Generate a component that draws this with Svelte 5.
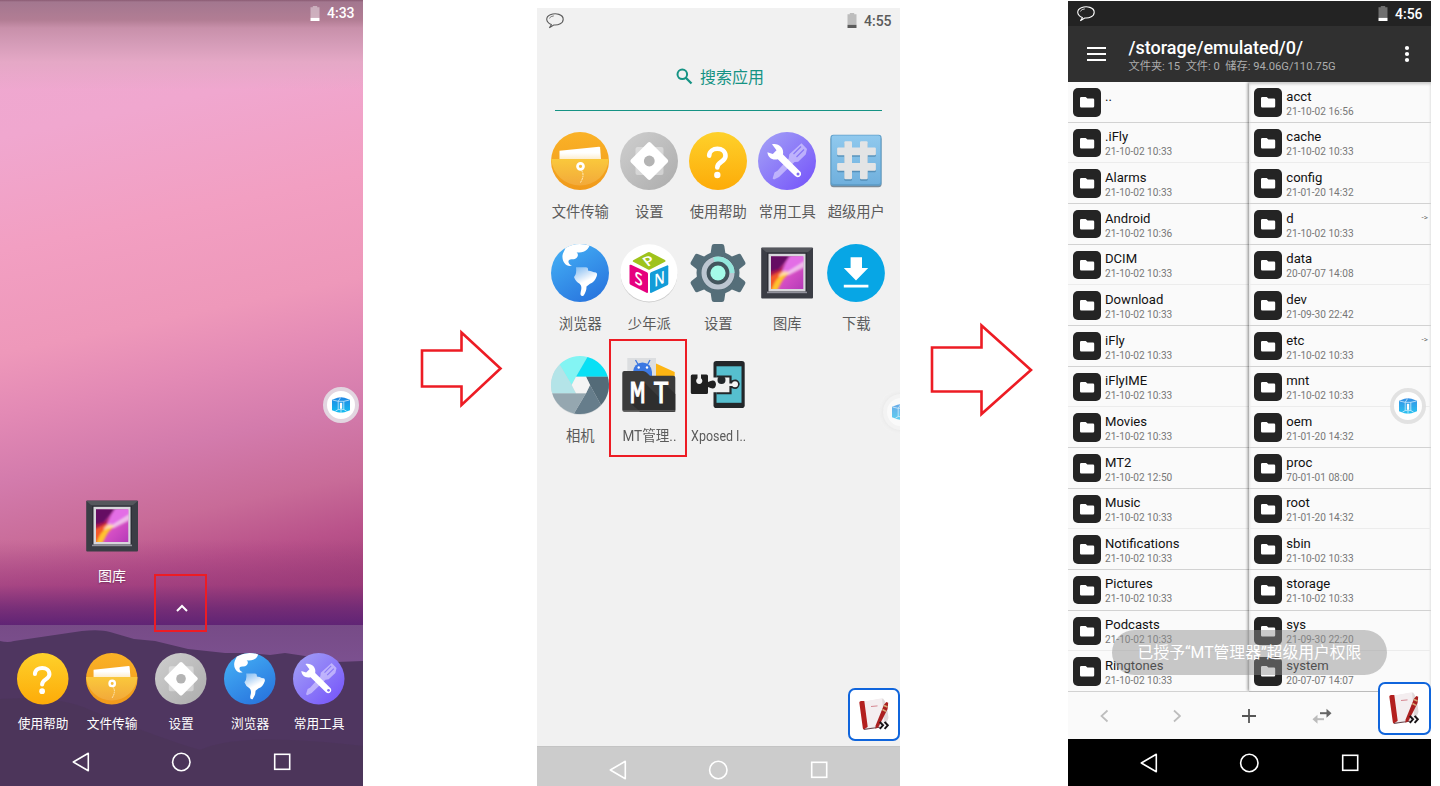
<script>
  const dock = [
    ['help', '使用帮助'], ['transfer', '文件传输'], ['settings', '设置'], ['browser', '浏览器'], ['tools', '常用工具']
  ];
  const apps = [
    ['transfer', '文件传输'], ['settings', '设置'], ['help', '使用帮助'], ['tools', '常用工具'], ['superuser', '超级用户'],
    ['browser', '浏览器'], ['psn', '少年派'], ['gear', '设置'], ['gallery', '图库'], ['download', '下载'],
    ['camera', '相机'], ['mt', 'MT管理..'], ['xposed', 'Xposed I..']
  ];
  const left = [
    ['..', ''], ['.iFly', '21-10-02 10:33'], ['Alarms', '21-10-02 10:33'], ['Android', '21-10-02 10:36'],
    ['DCIM', '21-10-02 10:33'], ['Download', '21-10-02 10:33'], ['iFly', '21-10-02 10:33'], ['iFlyIME', '21-10-02 10:33'],
    ['Movies', '21-10-02 10:33'], ['MT2', '21-10-02 12:50'], ['Music', '21-10-02 10:33'], ['Notifications', '21-10-02 10:33'],
    ['Pictures', '21-10-02 10:33'], ['Podcasts', '21-10-02 10:33'], ['Ringtones', '21-10-02 10:33']
  ];
  const right = [
    ['acct', '21-10-02 16:56'], ['cache', '21-10-02 10:33'], ['config', '21-01-20 14:32'], ['d', '21-10-02 10:33', true],
    ['data', '20-07-07 14:08'], ['dev', '21-09-30 22:42'], ['etc', '21-10-02 10:33', true], ['mnt', '21-10-02 10:33'],
    ['oem', '21-01-20 14:32'], ['proc', '70-01-01 08:00'], ['root', '21-01-20 14:32'], ['sbin', '21-10-02 10:33'],
    ['storage', '21-10-02 10:33'], ['sys', '21-09-30 22:20'], ['system', '20-07-07 14:07']
  ];
</script>

{#snippet icon(name)}
  <svg class="icon" viewBox="0 0 58 58">
    {#if name === 'transfer'}
      <circle cx="29" cy="29" r="29" fill="url(#gOrange)" />
      <path d="M8.5 18.8L48 14.7Q49 14.6 49.1 15.6L50 27H8.5Z" fill="url(#gPaper)" />
      <path d="M.1 27H57.9A29 29 0 0 1 .1 27Z" fill="url(#gPocket)" />
      <circle cx="29.5" cy="34.3" r="3" fill="none" stroke="#fff" stroke-width="2.7" />
      <path d="M30.5 38.5Q34 43 29.5 50.5" fill="none" stroke="#fff3d0" stroke-width=".9" stroke-dasharray="2 .7" />
    {:else if name === 'settings'}
      <circle cx="29" cy="29" r="29" fill="url(#gGrey)" />
      <rect x="15.5" y="15" width="28" height="28" rx="2" fill="#fff" opacity=".38" />
      <path d="M27.8 10.8Q29.3 9.3 30.8 10.8L47.6 27.6Q49 29 47.6 30.4L30.8 47.2Q29.3 48.7 27.8 47.2L11 30.4Q9.6 29 11 27.6Z" fill="#fff" />
      <circle cx="29.3" cy="29" r="5.4" fill="#b4b4b4" />
    {:else if name === 'help'}
      <circle cx="29" cy="29" r="29" fill="url(#gYellow)" />
      <path d="M20.2 23.6C20.5 14.5 36.5 14.5 36.5 24C36.5 30 28.3 29.5 28.3 35.4" fill="none" stroke="#fff" stroke-width="4.6" stroke-linecap="round" />
      <circle cx="28.3" cy="43" r="3.2" fill="#fff" />
    {:else if name === 'tools'}
      <circle cx="29" cy="29" r="29" fill="url(#gPurple)" />
      <g opacity=".58">
        <path d="M43.5 11.3L49 17L47.7 22.5L40.2 29.7L36.5 30L21 45L16 47.5L14.6 46.4L16.5 40.5L19.5 38.8L30.8 26.2L31.3 22.3Z" fill="#e3dcff" />
        <path d="M43 14.5L35.5 22M46 17.5L38.5 25" stroke="#8a79f5" stroke-width="1.3" />
      </g>
      <path d="M14 12.3C20 10.8 26.5 15.5 25 22.5L42.6 40Q44 42.8 41.5 44.8Q39 46 37.1 44.1L19.8 27.2C14.5 28.8 9.8 25.5 9.4 20.3L14.8 22.1L18.5 18.3Z" fill="#fff" />
      <circle cx="40" cy="42" r="1.5" fill="#806ef1" />
    {:else if name === 'superuser'}
      <rect x="3.5" y="4.2" width="51" height="51" rx="3" fill="#7b8b98" />
      <rect x="3.5" y="2.8" width="51" height="51" rx="2.8" fill="#5f9fca" />
      <rect x="4.6" y="3.6" width="48.8" height="48.4" rx="2" fill="url(#gSky)" />
      <path d="M18.5 10.8h5.3q1.2 0 1.2 1.2v5h8v-5q0-1.2 1.2-1.2h5.3q1.2 0 1.2 1.2v5h7q1.2 0 1.2 1.2v5.3q0 1.2-1.2 1.2h-7v7.8h7q1.2 0 1.2 1.2v5.3q0 1.2-1.2 1.2h-7v7.3q0 1.2-1.2 1.2h-5.3q-1.2 0-1.2-1.2v-7.3h-8v7.3q0 1.2-1.2 1.2h-5.3q-1.2 0-1.2-1.2v-7.3h-6q-1.2 0-1.2-1.2v-5.3q0-1.2 1.2-1.2h6v-7.8h-6q-1.2 0-1.2-1.2v-5.3q0-1.2 1.2-1.2h6v-5q0-1.2 1.2-1.2zM25 24.7v7.8h8v-7.8z" fill="#437da5" fill-rule="evenodd" opacity=".65" />
      <path d="M18.5 9.3h5.3q1.2 0 1.2 1.2v5h8v-5q0-1.2 1.2-1.2h5.3q1.2 0 1.2 1.2v5h7q1.2 0 1.2 1.2v5.3q0 1.2-1.2 1.2h-7v7.8h7q1.2 0 1.2 1.2v5.3q0 1.2-1.2 1.2h-7v7.3q0 1.2-1.2 1.2h-5.3q-1.2 0-1.2-1.2v-7.3h-8v7.3q0 1.2-1.2 1.2h-5.3q-1.2 0-1.2-1.2v-7.3h-6q-1.2 0-1.2-1.2v-5.3q0-1.2 1.2-1.2h6v-7.8h-6q-1.2 0-1.2-1.2v-5.3q0-1.2 1.2-1.2h6v-5q0-1.2 1.2-1.2zM25 23.2v7.8h8v-7.8z" fill="#e3e4e5" fill-rule="evenodd" />
    {:else if name === 'browser'}
      <circle cx="29" cy="29" r="29" fill="url(#gBlue)" />
      <path d="M14.5 3.9A29 29 0 0 1 38.5 1.6C37.5 5 34 9.5 25.5 8.3C28.5 10.5 26.5 15.5 21 15.2C15.5 14.8 17 20.5 21 21.6C16 23.5 11.5 18.5 11.5 13.5C11 10 13 7.5 14.5 3.9Z" fill="#fff" />
      <path d="M25 23.2H34.5Q37.5 23 37 26.5Q40.5 27 43 28.3Q47 28 45.8 32Q43.5 38.5 39 39.8L35.5 42.5Q35.7 47.5 32.2 52Q28.6 52.5 29.7 48Q31.5 42 28.7 39.7Q24.5 37.5 23 33Q26 30 25 23.2Z" fill="url(#gLand)" />
    {:else if name === 'psn'}
      <circle cx="29" cy="30.2" r="28.3" fill="#bdbdbd" opacity=".7" />
      <circle cx="29" cy="28.8" r="28.6" fill="#fff" />
      <path d="M28 8.2Q29 7.6 30 8.2L45 16Q46 17 45 17.8L30 25.5Q29 26 28 25.5L13.2 17.8Q12.3 17 13.2 16.2Z" fill="#9fc31c" />
      <path d="M9.5 21.5Q9.8 20.3 11 20.8L27 28.3Q28 28.8 28 30V47.8Q28 49.5 26.5 48.8L10.5 40.8Q9.5 40.2 9.5 39Z" fill="#e6007e" />
      <path d="M48.3 22.2Q48.2 21 47 21.5L31 28.3Q30 28.8 30 30V47.8Q30 49.5 31.5 48.8L47.3 41.2Q48.3 40.6 48.3 39.5Z" fill="#139cd8" />
      <text transform="matrix(1 -.45 .6 .75 32 20.8)" x="-4.8" y="0" class="cube">P</text>
      <text transform="matrix(1 .46 0 1.15 19 41)" x="-4.5" y="0" class="cube">S</text>
      <text transform="matrix(.9 -.4 0 1.15 39.2 41)" x="-5.5" y="0" class="cube">N</text>
    {:else if name === 'gear'}
      <g fill="#556e79">
        <circle cx="29" cy="29" r="21.5" />
        {#each [0, 60, 120, 180, 240, 300] as a}
          <path d="M22.7 2Q23 0 25 0H33Q35 0 35.3 2L36.5 10H21.5Z" transform="rotate({a} 29 29)" />
        {/each}
      </g>
      <circle cx="29" cy="29" r="17" fill="#4c626c" />
      <circle cx="29" cy="29" r="13.8" fill="none" stroke="#bcc6d1" stroke-width="5.5" />
      <path d="M25 15.8A13.8 13.8 0 0 1 42.8 29" fill="none" stroke="#94e6dc" stroke-width="5.5" />
      <circle cx="29" cy="29" r="11.4" fill="#43555d" />
      <circle cx="29" cy="29" r="7.6" fill="#a4fbe8" />
    {:else if name === 'gallery'}
      <rect x="3.2" y="3.5" width="51.8" height="51" rx="1" fill="#3b3d45" />
      <path d="M3.5 4H54.7L50 8H8Z" fill="#55575d" />
      <rect x="9" y="9" width="40" height="39.5" fill="#2d2e36" />
      <rect x="9" y="47.6" width="40" height="1.6" fill="#92929c" />
      <rect x="10.5" y="9.8" width="37" height="37.6" fill="#d8d7dc" />
      <rect x="13" y="12.4" width="32.3" height="32.6" fill="url(#gPic)" />
      <g clip-path="url(#picClip)"><g filter="url(#soft)">
        <path d="M11 10H33L25 20L18 29L11 33Z" fill="#650b64" />
        <path d="M11 28L22 25L27 20L24 27L11 37Z" fill="#ad1546" />
        <path d="M33 10H48V17L31 28L24 27Q28 18 33 10Z" fill="#e36ee6" />
        <path d="M11 33L23 27L31 28Q25 30 22 36L18 47H11Z" fill="#f4582c" />
        <path d="M13 47Q17 35 25 29L32 29Q26 33 23 39L19 47Z" fill="#ffc22f" />
        <path d="M21 31Q25 25 30 27.5L47 17V23L31 31Q25 30 21 33Z" fill="#fff" opacity=".6" />
      </g></g>
    {:else if name === 'download'}
      <circle cx="29" cy="29" r="28.9" fill="#07a6e5" />
      <path d="M23.6 13.3H35V24H41.2L29 36.5L16.8 24H23.6ZM16.8 40.7H41.4V43.5H16.8Z" fill="#fff" />
    {:else if name === 'camera'}
      <circle cx="29" cy="29.7" r="29" fill="#9ba5a9" opacity=".4" />
      <path d="M20.7 29L8.5 8.5A29 29 0 0 1 36.5 1L25 20.7Z" fill="#83f4f3" />
      <path d="M25 20.7L36.5 1A29 29 0 0 1 56.8 20.7H35Z" fill="#08e0f5" />
      <path d="M35 20.7H56.8A29 29 0 0 1 50 49L39 29Z" fill="#546b78" />
      <path d="M39 29L50 49A29 29 0 0 1 23 57.4L35 37.3Z" fill="#667d8b" />
      <path d="M35 37.3L23 57.4A29 29 0 0 1 1.2 37.3H25Z" fill="#95a7b0" />
      <path d="M25 37.3H1.2A29 29 0 0 1 8.5 8.5L20.7 29Z" fill="#b4e4e8" />
      <path d="M20.7 29L25 20.7H35L39 29L35 37.3H25Z" fill="#f4f4f4" />
    {:else if name === 'mt'}
      <path d="M7.3 2H36V20H7.3Z" fill="#dcdee0" />
      <path d="M13 16A9.5 9.5 0 0 1 32 16V20H13Z" fill="#3c78e2" />
      <path d="M15.5 4L19 10M30 4L26.8 10" stroke="#3c78e2" stroke-width="1.3" />
      <circle cx="18.7" cy="11.5" r="1.2" fill="#fff" /><circle cx="27" cy="11.5" r="1.2" fill="#fff" />
      <path d="M36 7.5L54.7 16V24H36Z" fill="#fdb513" />
      <path d="M2.3 17Q2.3 15 4.3 15H23Q25 15 26.5 16.5L30 19.7H53.3Q55.3 19.7 55.3 21.7V53.7Q55.3 55.7 53.3 55.7H4.3Q2.3 55.7 2.3 53.7Z" fill="#3b3b3b" />
      <path d="M10.5 47L25 27L39 41L44 27L55.3 38V55.7H20Z" fill="#2e2e2e" />
      <path d="M3 54.7H54.7" stroke="#5f5f5f" stroke-width="1" />
      <text transform="translate(17.5 47) scale(.9 1.08)" class="mono">M</text>
      <text transform="translate(41 47) scale(.9 1.08)" class="mono">T</text>
    {:else if name === 'xposed'}
      <rect x="24.5" y="5" width="31.2" height="47" rx="2.8" fill="#23272a" />
      <rect x="27.5" y="10.3" width="25" height="36.5" fill="#56bfcf" />
      <path d="M27.5 19.5H42.6V24.6Q49 21.2 50.8 28Q49 35.5 42.6 32V38.3H27.5Z" fill="#23272a" />
      <path d="M22 21.5H40.4V27.5H44Q47.5 24.8 48.5 28Q47.5 32 43.5 30H40.4V36.2H22Z" fill="#f1f1f1" />
      <circle cx="32.5" cy="24" r="4" fill="#23272a" />
      <circle cx="46" cy="28.2" r="3" fill="#f4f4f4" />
      <path d="M1.8 20Q1.8 18.5 3.3 18.5H8.5V22.3A3.1 3.1 0 1 0 12 22.3V18.5H17.5Q19 18.5 19 20V26Q26.5 22 27 28.3Q26.5 35 19 31V36.5Q19 38 17.5 38H3.3Q1.8 38 1.8 36.5Z" fill="#202020" />
    {/if}
  </svg>
{/snippet}

{#snippet battery()}
  <svg class="battery" viewBox="0 0 10 15"><path d="M2.8 0h4.4v1.2h2.3v10.6H.5V1.2h2.3z" class="shell" /><path d="M.5 11.8h9V15h-9z" class="charge" /></svg>
{/snippet}

{#snippet bubble()}
  <svg class="bubble" viewBox="0 0 18 16" fill="none" stroke="currentColor"><path d="M5.3 11.6C-.6 9-.6 4 4.3 1.8C10-.5 17.2 1.5 17.2 6.2C17.2 10.3 12.5 12.4 7.7 12L3.3 14.8Q5 12.8 5.3 11.6Z" stroke-width="1.1" /><path d="M3.3 5.3Q4.8 3 7.8 2.9" stroke-width=".8" /></svg>
{/snippet}

{#snippet nav()}
  <svg class="navicons" viewBox="0 0 363 22" fill="none" stroke="currentColor" stroke-width="1.6">
    <path d="M73.3 11L88.3 2.3V19.7Z" stroke-linejoin="round" /><circle cx="181.3" cy="11" r="8.7" /><rect x="274.7" y="3.3" width="15" height="15" />
  </svg>
{/snippet}

{#snippet cube()}
  <svg class="cubeicon" viewBox="0 0 18 16">
    <path d="M0 2.8L5.5 .8Q9 -.2 12.5 .8L18 2.8V13.2L12.5 15.3Q9 16.2 5.5 15.3L0 13.2Z" fill="url(#gCube)" />
    <path d="M.5 3L6.2 4.3H11.8L17.5 3M6.2 4.3V12.6M11.8 4.3V12.6M8.6 .5L6.4 4M3.5 14L6.2 12.6H11.8L14.5 14M9 12.6V16" fill="none" stroke="#e4f5ff" stroke-width=".7" />
    <rect x="7.9" y="5.8" width="2.3" height="6" fill="#fff" />
  </svg>
{/snippet}

{#snippet book()}
  <svg class="bookicon" viewBox="0 0 52 52">
    <path d="M15 14L35 10.5Q39 14 40.5 30L38 36L17 42Z" fill="#e0d9da" />
    <path d="M16 13.4L34 10.2L36.5 36L19.5 40.3Z" fill="#f4eef0" />
    <path d="M11.3 14.5Q11.5 13 13 12.9L16.3 13L19.7 38.8L16 41.5Q15 41.5 14.8 40Z" fill="#b3201f" />
    <path d="M16 41.4L32 39.2" stroke="#67414a" stroke-width="1" />
    <path d="M23 18.5L29.5 17.9" stroke="#d58691" stroke-width="1" />
    <path d="M40.2 14.7L38.4 13.9L36 16.8L27.6 37.5L27.4 40.8L30.5 39L39.6 21Z" fill="#ab2020" />
    <path d="M36 17.5L39.5 19M34.4 21.5L38 23.4" stroke="#d5ab78" stroke-width="1.6" />
    <path d="M31.8 33.8L35 37.3L31.8 40.8M36.6 33.8L39.8 37.3L36.6 40.8" fill="none" stroke="#191417" stroke-width="2" />
  </svg>
{/snippet}

{#snippet row(item)}
  <div class="row">
    <div class="folder"><svg viewBox="0 0 28 28"><path d="M7 10.3Q7 9 8.3 9H12.7L14.4 10.5H20Q21.2 10.5 21.2 11.7V18.3Q21.2 19.5 20 19.5H8.3Q7 19.5 7 18.3Z" fill="#fff" /></svg></div>
    <div class="meta"><div class="name">{item[0]}</div><div class="date">{item[1]}</div></div>
    {#if item[2]}<div class="link">-&gt;</div>{/if}
  </div>
{/snippet}

<svg class="defs" width="0" height="0">
  <defs>
    <linearGradient id="gOrange" x1="0" y1="0" x2="0" y2="1"><stop offset="0" stop-color="#fab227" /><stop offset="1" stop-color="#f09a1b" /></linearGradient>
    <linearGradient id="gPocket" x1="0" y1="0" x2="0" y2="1"><stop offset="0" stop-color="#fac83c" /><stop offset="1" stop-color="#f2a93a" /></linearGradient>
    <linearGradient id="gPaper" x1="0" y1="0" x2="0" y2="1"><stop offset=".5" stop-color="#fff" /><stop offset="1" stop-color="#fdeed0" /></linearGradient>
    <linearGradient id="gGrey" x1="0" y1="0" x2="1" y2="1"><stop offset="0" stop-color="#cfcfcf" /><stop offset="1" stop-color="#acacac" /></linearGradient>
    <linearGradient id="gYellow" x1="0" y1="0" x2="0" y2="1"><stop offset="0" stop-color="#fed12b" /><stop offset="1" stop-color="#fdab08" /></linearGradient>
    <linearGradient id="gPurple" x1="0" y1="0" x2="1" y2="1"><stop offset="0" stop-color="#a5a4f6" /><stop offset="1" stop-color="#7350fa" /></linearGradient>
    <linearGradient id="gSky" x1="0" y1="0" x2="0" y2="1"><stop offset="0" stop-color="#90c9ee" /><stop offset="1" stop-color="#70b0dd" /></linearGradient>
    <linearGradient id="gBlue" x1="0" y1="0" x2=".6" y2="1"><stop offset="0" stop-color="#46b4f7" /><stop offset="1" stop-color="#2a78df" /></linearGradient>
    <linearGradient id="gLand" x1="0" y1="0" x2=".4" y2="1"><stop offset="0" stop-color="#fff" stop-opacity=".35" /><stop offset=".6" stop-color="#fff" /></linearGradient>
    <linearGradient id="gPic" x1="0" y1="0" x2="1" y2="1"><stop offset="0" stop-color="#74105f" /><stop offset=".5" stop-color="#dc53c8" /><stop offset="1" stop-color="#b53ab8" /></linearGradient>
    <linearGradient id="gCube" x1="0" y1="0" x2="0" y2="1"><stop offset="0" stop-color="#2086e4" /><stop offset="1" stop-color="#12bdf0" /></linearGradient>
    <clipPath id="picClip"><rect x="13" y="12.4" width="32.3" height="32.6" /></clipPath>
    <filter id="soft"><feGaussianBlur stdDeviation="1" /></filter>
  </defs>
</svg>

<main>
  <section class="phone home">
    <div class="status">{@render battery()}<span>4:33</span></div>
    <div class="desktop">
      <div class="app">{@render icon('gallery')}<span>图库</span></div>
    </div>
    <div class="drawer"><svg viewBox="0 0 12 8"><path d="M1 7L6 2L11 7" fill="none" stroke="#fff" stroke-width="2" /></svg></div>
    <div class="bottom">
      <svg class="hills" viewBox="0 0 363 161" preserveAspectRatio="none"><path d="M0 16Q8 18 14 16L82 6Q100 4 110 7L134 14L155 16L188 24L225 28L250 28L270 30L285 28L305 31L337 37L363 36V161H0Z" fill="#4f3660" /><path d="M90 85Q60 70 0 74V161H363V121Q240 106 200 125Q165 115 90 85Z" fill="#4c3559" opacity=".7" /></svg>
      <div class="dock">
        {#each dock as a}<div class="app">{@render icon(a[0])}<span>{a[1]}</span></div>{/each}
      </div>
      {@render nav()}
    </div>
    <div class="mark caret"></div>
    <div class="float">{@render cube()}</div>
  </section>

  <svg class="arrow first" viewBox="0 0 174 786"><path d="M59 350.5H98.5V332.5L137.5 368.5L98.5 405V386.5H59Z" /></svg>

  <section class="phone list">
    <div class="status">{@render bubble()}<i></i>{@render battery()}<span>4:55</span></div>
    <div class="search">
      <svg viewBox="0 0 17 17" fill="none" stroke="currentColor"><circle cx="6.3" cy="6.3" r="4.8" stroke-width="2" /><path d="M9.8 9.8L15.5 15.5" stroke-width="2.3" /></svg>
      <span>搜索应用</span>
    </div>
    <div class="grid">
      {#each apps as a}<div class="app" class:latin={a[0] === 'xposed'} class:mixed={a[0] === 'mt'}>{@render icon(a[0])}<span>{a[1]}</span></div>{/each}
    </div>
    <div class="bar">{@render nav()}</div>
    <div class="mark mtbox"></div>
    <div class="float faded">{@render cube()}</div>
    <div class="widget">{@render book()}</div>
  </section>

  <svg class="arrow second" viewBox="0 0 168 786"><path d="M32 347.5H81.5V325.5L131 370L81.5 414V391.5H32Z" /></svg>

  <section class="phone files">
    <div class="status">{@render bubble()}<i></i>{@render battery()}<span>4:56</span></div>
    <header>
      <svg class="menu" viewBox="0 0 19 14"><path d="M0 1H19M0 7H19M0 13H19" stroke="#fff" stroke-width="2" /></svg>
      <div class="title"><b>/storage/emulated/0/</b><small>文件夹: 15&nbsp; 文件: 0&nbsp; 储存: 94.06G/110.75G</small></div>
      <svg class="more" viewBox="0 0 6 18" fill="#fff"><circle cx="3" cy="3" r="2.1" /><circle cx="3" cy="9" r="2.1" /><circle cx="3" cy="15" r="2.1" /></svg>
    </header>
    <div class="panes">
      <div class="pane">{#each left as item}{@render row(item)}{/each}</div>
      <div class="pane side">{#each right as item}{@render row(item)}{/each}</div>
    </div>
    <svg class="toolbar" viewBox="0 0 363 47" fill="none" stroke-width="1.7">
      <path d="M39.5 18.5L33.5 24L39.5 29.5M106 18.5L112 24L106 29.5" stroke="#bdbdbd" />
      <path d="M181 17V31M174 24H188" stroke="#555" stroke-width="1.8" />
      <path d="M252 21.2H260" stroke="#666" stroke-width="2" /><path d="M258.5 16.7L263.5 21.2L258.5 25.7Z" fill="#666" />
      <path d="M249 27.2H256" stroke="#bbb" stroke-width="2" /><path d="M249.5 22.7L244.5 27.2L249.5 31.7Z" fill="#bbb" />
      <path d="M318 24L324 18" stroke="#ccc" />
    </svg>
    <div class="bar">{@render nav()}</div>
    <div class="float soft">{@render cube()}</div>
    <div class="toast">已授予“MT管理器”超级用户权限</div>
    <div class="widget">{@render book()}</div>
  </section>
</main>

<style>
  :global(body) { margin: 0; background: #fff; overflow: hidden; }
  * { box-sizing: border-box; }
  svg { display: block; flex: none; }
  .defs { position: absolute; }
  main { display: flex; align-items: flex-start; width: 1440px; height: 786px; overflow: hidden; background: #fff; font-family: Roboto, "Noto Sans CJK SC", sans-serif; }
  .phone { position: relative; display: flex; flex-direction: column; flex: none; width: 363px; height: 786px; overflow: hidden; }
  .status { display: flex; align-items: center; justify-content: flex-end; height: 25px; padding-right: 8px; flex: none; font-size: 14px; font-weight: 500; line-height: 26px; }
  .status i { flex: 1; }
  .status span { width: 28px; margin-left: 7.5px; white-space: nowrap; }
  .battery { width: 10px; height: 15px; }
  .bubble { width: 18px; height: 16px; margin-left: 9px; }
  .shell { fill: currentColor; opacity: .35; }
  .charge { fill: currentColor; }
  .navicons { width: 363px; height: 22px; }
  .app { display: flex; flex-direction: column; align-items: center; width: 69px; white-space: nowrap; }
  .icon { width: 58px; height: 58px; overflow: visible; }
  .cube { font: 600 15px "Open Sans", sans-serif; fill: #fff; }
  .mono { font: 29px "Liberation Mono", monospace; fill: #fff; stroke: #fff; stroke-width: 1; text-anchor: middle; }

  .home { color: #fff; background: linear-gradient(#8a5a72 0, #a3778f 2px, #b27d94 20px, #c890aa 28px, #d59cb8 44px, #e5a8c6 62px, transparent 90px), linear-gradient(transparent 540px, #93347a88 585px, #6b2875d0 608px, #602475 625px), linear-gradient(168deg, #eea8d0 5%, #f0a7cf 16%, #f29fc2 29%, #ee98ba 41%, #e38ab5 48%, #d37bac 56%, #c86b98 64%, #b9528a 70%, #9f3f75 77%, #8a3580 84%, #632570 90%); }
  .home .status { height: 26px; }
  .home .shell { opacity: .4; }
  .desktop { display: flex; padding: 471px 0 0 77.5px; height: 569px; }
  .desktop .app span { margin-top: 11px; font-size: 14px; line-height: 20px; text-shadow: 0 1px 2px #0005; }
  .drawer { display: flex; justify-content: center; height: 30px; padding-top: 9px; }
  .drawer svg { width: 12px; height: 8px; }
  .bottom { position: relative; flex: 1; background: linear-gradient(#774b87, #7c5190 40px); }
  .hills { position: absolute; inset: 0; width: 363px; height: 161px; }
  .dock { position: relative; display: flex; padding: 28px 0 0 8.6px; height: 126px; }
  .dock .icon { width: 51.5px; height: 51.5px; }
  .dock span { margin-top: 9px; font-size: 12.7px; line-height: 20px; }
  .bottom .navicons { position: relative; }
  .mark { position: absolute; border: 2px solid #ed1c24; }
  .caret { left: 153.5px; top: 574px; width: 53.5px; height: 58px; }

  .float { position: absolute; left: 322.5px; top: 387px; display: flex; align-items: center; justify-content: center; width: 36px; height: 36px; border: 4px solid #e2d5e0; border-radius: 50%; background: #fff; }
  .cubeicon { width: 18px; height: 16px; }
  .faded { left: 346px; top: 386px; border-color: #f5f5f5; opacity: .65; box-shadow: 0 0 4px #ddd; }
  .soft { top: 387px; left: 322px; border-color: #e0e0e0; opacity: .9; }

  .arrow { height: 786px; fill: none; stroke: #ed1c24; stroke-width: 2.6; }
  .first { width: 174px; }
  .second { width: 168px; }

  .list { margin-top: 8px; height: 778px; background: #f1f1f1; color: #5b5b5b; }
  .search { display: flex; align-items: center; justify-content: center; width: 327px; height: 70px; margin: 8px 18px 0; padding: 1px 0 0 3px; border-bottom: 1.5px solid #159384; color: #159384; font-size: 16px; gap: 7px; }
  .search svg { width: 17px; height: 17px; }
  .grid { display: grid; grid-template-columns: repeat(5, 69px); grid-auto-rows: 112px; align-content: start; padding: 21px 0 0 8.8px; flex: 1; }
  .grid span { margin-top: 11.5px; font-size: 14.3px; line-height: 20px; }
  .latin span { transform: scaleX(.87); }
  .mixed span { transform: scaleX(.95); }
  .list .bar { display: flex; align-items: center; height: 40px; padding-top: 7px; background: #ccc; border-top: 1px solid #c4c4c4; color: #fff; }
  .mtbox { left: 72px; top: 331px; width: 78px; height: 118px; border-width: 2.5px; }
  .widget { position: absolute; right: 0; top: 680px; width: 52.5px; height: 53px; border: 2px solid #1065dc; border-radius: 7px; background: #fff; }
  .bookicon { width: 52px; height: 52px; margin: -2px; }

  .files { margin-top: 1px; height: 785px; background: #fafafa; color: #111; }
  .files .status { background: #232323; color: #fff; }
  header { display: flex; align-items: center; height: 56px; background: #303030; color: #fff; flex: none; }
  .menu { width: 19px; height: 14px; margin-left: 18.5px; }
  .title { display: flex; flex-direction: column; flex: 1; margin-left: 23px; padding-top: 5px; white-space: nowrap; }
  .title b { font-size: 18px; font-weight: 500; line-height: 20px; }
  .title small { font-size: 11.2px; line-height: 18px; color: #adadad; }
  .more { width: 6px; height: 18px; margin-right: 21.5px; }
  .panes { display: flex; height: 610px; border-bottom: 1px solid #bbb; flex: none; }
  .pane { width: 181.3px; }
  .side { width: 181.7px; box-shadow: -1px 0 3px #0007, inset 0 2px 3px #0003; clip-path: inset(0 0 0 -5px); }
  .row { display: flex; height: 40.66px; padding: 6px 0 0 4.5px; border-bottom: 1px solid #d2d2d2; }
  .row:nth-child(3n + 2) { border-color: #ececec; }
  .folder { width: 28.5px; height: 28.5px; border-radius: 5px; background: #242424; flex: none; }
  .folder svg { width: 28px; height: 28px; }
  .meta { flex: 1; margin: .6px 0 0 4px; }
  .name { height: 16px; font-size: 13.1px; line-height: 16px; color: #111; }
  .date { font-size: 10.1px; line-height: 14px; color: #777; }
  .link { padding: 4px 3px 0 0; font-size: 8px; line-height: 8px; color: #666; }
  .toolbar { width: 363px; height: 47px; }
  .files .bar { height: 47px; padding-top: 13px; background: #000; color: #fff; }
  .toast { position: absolute; left: 44px; top: 629px; width: 275px; height: 44.5px; border-radius: 23px; background: rgba(145, 145, 145, .48); color: #fff; font-size: 15.8px; line-height: 45px; text-align: center; white-space: nowrap; }
  .files .widget { right: .5px; top: 680.5px; }
</style>
